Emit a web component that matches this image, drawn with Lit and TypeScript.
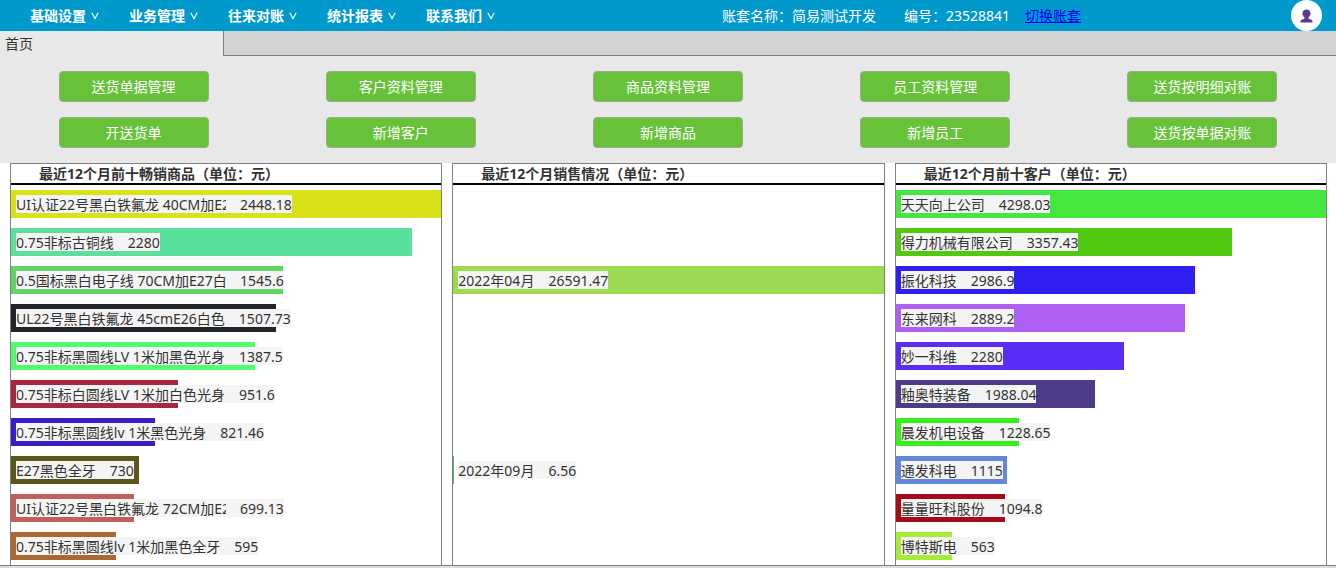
import { LitElement, html, css, svg } from "lit";
import { customElement, property } from "lit/decorators.js";
import { styleMap } from "lit/directives/style-map.js";

interface Entry {
  name: string;
  value: number;
  color: string;
}

type Slot = Entry | null;

const MENUS = ["基础设置", "业务管理", "往来对账", "统计报表", "联系我们"];

const SHORTCUTS = [
  "送货单据管理", "客户资料管理", "商品资料管理", "员工资料管理", "送货按明细对账",
  "开送货单", "新增客户", "新增商品", "新增员工", "送货按单据对账",
];

const PRODUCTS: Slot[] = [
  { name: "UI认证22号黑白铁氟龙 40CM加E27", value: 2448.18, color: "#d9e216" },
  { name: "0.75非标古铜线", value: 2280, color: "#5ae09c" },
  { name: "0.5国标黑白电子线 70CM加E27白", value: 1545.6, color: "#60d465" },
  { name: "UL22号黑白铁氟龙 45cmE26白色", value: 1507.73, color: "#212529" },
  { name: "0.75非标黑圆线LV 1米加黑色光身", value: 1387.5, color: "#51fb6c" },
  { name: "0.75非标白圆线LV 1米加白色光身", value: 951.6, color: "#ab2741" },
  { name: "0.75非标黑圆线lv 1米黑色光身", value: 821.46, color: "#391dcb" },
  { name: "E27黑色全牙", value: 730, color: "#5a571a" },
  { name: "UI认证22号黑白铁氟龙 72CM加E27", value: 699.13, color: "#c1605b" },
  { name: "0.75非标黑圆线lv 1米加黑色全牙", value: 595, color: "#ac6832" },
];

const MONTHS: Slot[] = [
  null,
  null,
  { name: "2022年04月", value: 26591.47, color: "#9cda52" },
  null,
  null,
  null,
  null,
  { name: "2022年09月", value: 6.56, color: "#5fae5a" },
  null,
  null,
];

const CUSTOMERS: Slot[] = [
  { name: "天天向上公司", value: 4298.03, color: "#45e63d" },
  { name: "得力机械有限公司", value: 3357.43, color: "#50c90e" },
  { name: "振化科技", value: 2986.9, color: "#2f1ff3" },
  { name: "东来网科", value: 2889.2, color: "#ae60f2" },
  { name: "妙一科维", value: 2280, color: "#5a2cf6" },
  { name: "釉奥特装备", value: 1988.04, color: "#4e3b89" },
  { name: "晨发机电设备", value: 1228.65, color: "#36f01c" },
  { name: "通发科电", value: 1115, color: "#6487dc" },
  { name: "量量旺科股份", value: 1094.8, color: "#a80a1a" },
  { name: "博特斯电", value: 563, color: "#a5ed34" },
];

const chevron = svg`<path d="M0.8 0.8 L4 6.6 L7.2 0.8" fill="none" stroke="currentColor" stroke-width="1.1"/>`;

@customElement("bar-panel")
export class BarPanel extends LitElement {
  @property() heading = "";
  @property({ attribute: false }) rows: Slot[] = [];

  static styles = css`
    :host {
      display: block;
      min-width: 0;
      box-sizing: border-box;
      border: 1px solid #808080;
      border-bottom: 0;
      background: #fff;
    }
    .title {
      margin: 0;
      padding-left: 28px;
      border-bottom: 2px solid #000;
      font-size: 14px;
      line-height: 19px;
      font-weight: bold;
      white-space: nowrap;
    }
    .rows {
      list-style: none;
      margin: 0;
      padding: 5px 0;
      display: grid;
      grid-auto-rows: 28px;
      row-gap: 10px;
    }
    .bar {
      display: flex;
      align-items: center;
      height: 28px;
      min-width: 1px;
    }
    .label {
      flex: none;
      display: flex;
      gap: 14px;
      margin-left: 5px;
      background: #f4f4f4;
      line-height: 16px;
      white-space: nowrap;
    }
    .name,
    .value {
      padding-top: 2px;
    }
    .name {
      max-width: 210px;
      overflow: hidden;
    }
  `;

  render() {
    const max = Math.max(...this.rows.map((r) => r?.value ?? 0));
    return html`
      <h2 class="title">${this.heading}</h2>
      <ul class="rows">
        ${this.rows.map((r) =>
          r
            ? html`<li>
                <div class="bar" style=${styleMap({ width: `${(r.value / max) * 100}%`, background: r.color })}>
                  <div class="label"><span class="name">${r.name}</span><span class="value">${r.value}</span></div>
                </div>
              </li>`
            : html`<li></li>`
        )}
      </ul>
    `;
  }
}

@customElement("app-root")
export class AppRoot extends LitElement {
  static styles = css`
    :host {
      display: flex;
      flex-direction: column;
      min-height: 100vh;
      background: #fff;
      color: #333;
      font-family: "Noto Sans", "Noto Sans CJK SC", sans-serif;
      font-size: 14px;
      line-height: 20px;
    }
    button {
      font: inherit;
      color: inherit;
      border: 0;
      padding: 0;
      background: none;
      cursor: pointer;
    }
    .header {
      display: flex;
      align-items: center;
      height: 31px;
      padding: 0 14px 0 15px;
      background: #0099cc;
      color: #fff;
      white-space: nowrap;
    }
    .menu {
      display: flex;
    }
    .menu-item {
      display: flex;
      align-items: center;
      gap: 5px;
      padding: 0 15px;
      font-weight: bold;
    }
    .chevron {
      width: 8px;
      height: 8px;
    }
    .account {
      display: flex;
      margin-left: auto;
      margin-right: 210px;
    }
    .book {
      margin-right: 28px;
    }
    .switch {
      margin-left: 15px;
      color: #0000ee;
    }
    .avatar {
      display: grid;
      place-items: center;
      width: 31px;
      height: 31px;
      border-radius: 50%;
      background: #fff;
      color: #5c3b8e;
    }
    .person {
      width: 13px;
      height: 14px;
    }
    .tabs {
      display: grid;
      grid-template-columns: 1fr 5fr;
      height: 25px;
      background: #e8e8e8;
    }
    .tab {
      padding-left: 5px;
      text-align: left;
    }
    .tab-rest {
      border-left: 1px solid #808080;
      border-bottom: 1px solid #808080;
      background: #d3d3d3;
    }
    .shortcuts {
      display: grid;
      grid-template-columns: repeat(5, 1fr);
      justify-items: center;
      row-gap: 15px;
      padding: 15px 0;
      background: #e8e8e8;
    }
    .shortcut {
      width: 150px;
      height: 31px;
      border: 1px solid #9aab90;
      border-radius: 4px;
      background: #67c23a;
      color: #fff;
    }
    .panels {
      display: grid;
      grid-template-columns: repeat(3, 1fr);
      column-gap: 10px;
      padding: 0 9px 0 10px;
    }
    .footer {
      flex: 1;
      border-top: 1px solid #808080;
      background: #dcdcdc;
    }
  `;

  render() {
    return html`
      <header class="header">
        <nav class="menu">
          ${MENUS.map(
            (m) => html`<button class="menu-item" type="button">
              ${m}<svg class="chevron" viewBox="0 0 8 8" aria-hidden="true">${chevron}</svg>
            </button>`
          )}
        </nav>
        <div class="account">
          <span class="book">账套名称：简易测试开发</span>
          <span>编号：23528841</span>
          <a class="switch" href="#">切换账套</a>
        </div>
        <button class="avatar" type="button" aria-label="用户">
          <svg class="person" viewBox="0 0 13 14" aria-hidden="true">
            <path
              fill="currentColor"
              d="M6.5 0.500C4.100 0.500 2.700 1.800 2.700 3.800c-.6.2-.6 1.900.2 2.100.3 1.300.9 2 1.600 2.500v1.100C3.800 10.200 0.500 10.300 0.500 12.400V13.500h12v-1.100C12.500 10.300 9.200 10.200 8.500 9.500V8.400c.7-.5 1.300-1.200 1.600-2.500.8-.2.8-1.900.2-2.100C10.300 1.800 8.900 0.500 6.500 0.500z"
            />
          </svg>
        </button>
      </header>
      <div class="tabs">
        <button class="tab" type="button">首页</button>
        <div class="tab-rest"></div>
      </div>
      <section class="shortcuts">
        ${SHORTCUTS.map((s) => html`<button class="shortcut" type="button">${s}</button>`)}
      </section>
      <main class="panels">
        <bar-panel heading="最近12个月前十畅销商品（单位：元）" .rows=${PRODUCTS}></bar-panel>
        <bar-panel heading="最近12个月销售情况（单位：元）" .rows=${MONTHS}></bar-panel>
        <bar-panel heading="最近12个月前十客户（单位：元）" .rows=${CUSTOMERS}></bar-panel>
      </main>
      <footer class="footer"></footer>
    `;
  }
}
